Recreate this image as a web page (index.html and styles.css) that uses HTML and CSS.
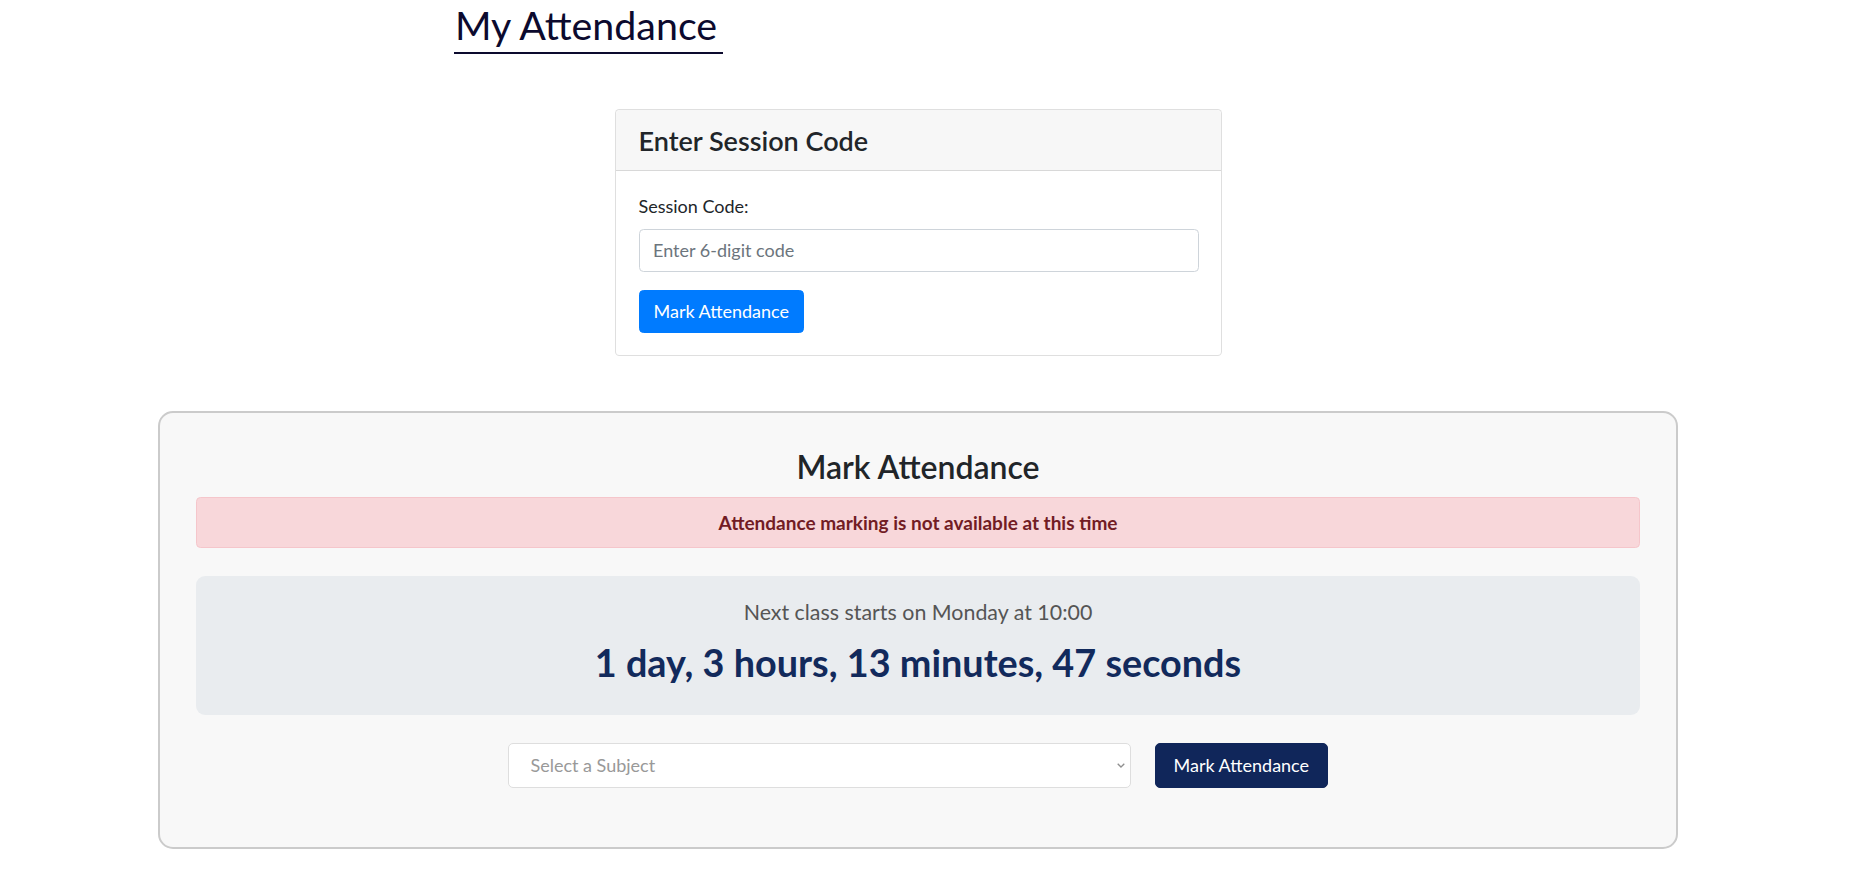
FILE: index.html
```html
<!DOCTYPE html>
<html lang="en">
<head>
<meta charset="utf-8">
<title>My Attendance</title>
<link rel="stylesheet" href="styles.css">
</head>
<body>
<header class="page-head">
  <h1 class="page-title">My Attendance</h1>
</header>
<main class="page-main">
  <section class="code-card">
    <div class="code-card__header">
      <h4 class="code-card__title">Enter Session Code</h4>
    </div>
    <div class="code-card__body">
      <label class="field-label" for="code">Session Code:</label>
      <input class="field-input" id="code" type="text" placeholder="Enter 6-digit code">
      <button class="btn btn-blue" type="button">Mark Attendance</button>
    </div>
  </section>

  <section class="attend-panel">
    <h3 class="attend-panel__title">Mark Attendance</h3>
    <div class="alert-danger">Attendance marking is not available at this time</div>
    <div class="countdown">
      <p class="countdown__label">Next class starts on Monday at 10:00</p>
      <div class="countdown__timer">1 day, 3 hours, 13 minutes, 47 seconds</div>
    </div>
    <form class="mark-row">
      <div class="select-wrap">
        <select class="subject-select">
          <option value="" selected>Select a Subject</option>
        </select>
        <svg class="select-chevron" width="8" height="5" viewBox="0 0 8 5" aria-hidden="true"><path d="M0.7 0.7 L4 4 L7.3 0.7" fill="none" stroke="#8f8f8f" stroke-width="1.3"/></svg>
      </div>
      <button class="btn btn-navy" type="button">Mark Attendance</button>
    </form>
  </section>
</main>
</body>
</html>
```
FILE: styles.css
```css
* { box-sizing: border-box; }

html, body {
  margin: 0;
  padding: 0;
  background: #ffffff;
}

body {
  font-family: "Lato", "Open Sans", sans-serif;
  font-size: 18px;
  line-height: 1.5;
  color: #212529;
}

/* ---------- page heading ---------- */
.page-head {
  padding-left: 454px;
}

.page-title {
  display: inline-block;
  margin: 0;
  padding: 1px 6px 4px 1px;
  font-size: 39.4px;
  font-weight: 400;
  line-height: 47px;
  color: #0c0a2e;
  border-bottom: 2px solid #0c0a2e;
}

/* ---------- session code card ---------- */
.page-main {
  padding-bottom: 30px;
}

.code-card {
  width: 607px;
  margin: 55px 0 0 615px;
  background: #ffffff;
  border: 1px solid rgba(0, 0, 0, 0.125);
  border-radius: 4.5px;
}

.code-card__header {
  padding: 15px 22.5px 12.5px;
  background: #f7f7f7;
  border-bottom: 1px solid rgba(0, 0, 0, 0.125);
  border-radius: 4.5px 4.5px 0 0;
}

.code-card__title {
  margin: 0;
  font-size: 27px;
  font-weight: 600;
  line-height: 1.2;
  color: #212529;
}

.code-card__body {
  display: flex;
  flex-direction: column;
  align-items: flex-start;
  padding: 22px 22.5px;
}

.field-label {
  display: block;
  margin-bottom: 9px;
  font-size: 18px;
  line-height: 27px;
}

.field-input {
  width: 100%;
  height: 43px;
  padding: 0 13.5px;
  font-family: inherit;
  font-size: 18px;
  color: #495057;
  background: #ffffff;
  border: 1px solid #ced4da;
  border-radius: 4.5px;
  outline: none;
}

.field-input::placeholder {
  color: #6c757d;
  opacity: 1;
}

.btn {
  font-family: inherit;
  font-size: 18px;
  line-height: 27px;
  color: #ffffff;
  border: 1px solid transparent;
  cursor: pointer;
  white-space: nowrap;
}

.btn-blue {
  margin-top: 18px;
  height: 43px;
  padding: 0 14px;
  background: #007bff;
  border-color: #007bff;
  border-radius: 4.5px;
}

/* ---------- attendance panel ---------- */
.attend-panel {
  width: 1520px;
  margin: 55px 0 0 158px;
  padding: 35px 36px 39px;
  background: #f8f8f8;
  border: 2px solid #cbcbcb;
  border-radius: 15px;
}

.attend-panel__title {
  margin: 0 0 11px;
  text-align: center;
  font-size: 32px;
  font-weight: 600;
  line-height: 1.2;
  color: #212529;
}

.alert-danger {
  padding: 11px 22px;
  text-align: center;
  font-size: 19px;
  font-weight: 700;
  line-height: 27px;
  color: #721c24;
  background: #f8d7da;
  border: 1px solid #f5c6cb;
  border-radius: 4.5px;
}

.countdown {
  margin-top: 27.7px;
  padding: 19.7px 20px 29.2px;
  text-align: center;
  background: #e9ecef;
  border-radius: 9px;
}

.countdown__label {
  margin: 0 0 12.6px;
  font-size: 21.4px;
  font-weight: 400;
  line-height: 1.5;
  color: #555555;
}

.countdown__timer {
  font-size: 37.8px;
  font-weight: 700;
  line-height: 1.2;
  color: #122a5c;
}

.mark-row {
  display: flex;
  justify-content: center;
  align-items: center;
  gap: 23.6px;
  margin: 28px 0 20px;
}

.select-wrap {
  position: relative;
  width: 623px;
}

.subject-select {
  display: block;
  width: 100%;
  height: 45px;
  padding: 0 30px 0 21.5px;
  font-family: inherit;
  font-size: 18px;
  color: #999999;
  background: #ffffff;
  border: 1px solid #dedede;
  border-radius: 5px;
  appearance: none;
  -webkit-appearance: none;
  outline: none;
}

.select-chevron {
  position: absolute;
  right: 6px;
  top: 20px;
}

.btn-navy {
  height: 44.7px;
  padding: 0 18px;
  background: #10265a;
  border-color: #10265a;
  border-radius: 5px;
}
```
